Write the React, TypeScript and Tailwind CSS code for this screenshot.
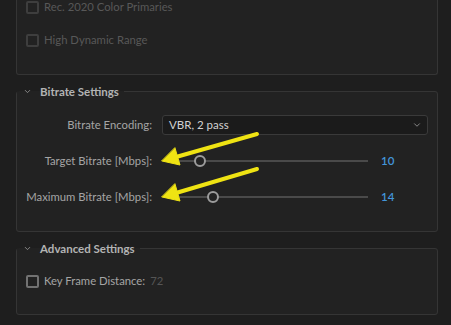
import { ChevronDown } from "lucide-react";

function Checkbox({ dim }: { dim?: boolean }) {
  return (
    <span
      className={`inline-block h-[13px] w-[13px] shrink-0 rounded-[2px] border-2 ${
        dim ? "border-[#3e3e3e]" : "border-[#727272]"
      }`}
    />
  );
}

function Legend({ title }: { title: string }) {
  return (
    <legend className="flex h-4 items-center pl-[6px] pr-[5px]">
      <ChevronDown className="h-[9px] w-[9px] text-[#8a8a8a]" strokeWidth={2.5} />
      <span className="ml-[8px] mt-[1px] text-[11.5px] font-bold text-[#b3b3b3]">{title}</span>
    </legend>
  );
}

function SliderRow({ label, value, thumb }: { label: string; value: number; thumb: number }) {
  return (
    <div className="mt-4 flex h-5 items-center">
      <span className="w-[135px] text-right">{label}</span>
      <div className="relative ml-[12px] h-5 w-[204px]">
        <div className="absolute left-0 right-0 top-[9px] h-[2px] bg-[#4a4a4a]" />
        <div
          className="absolute top-[4px] h-[12px] w-[12px] rounded-full border-2 border-[#9c9c9c] bg-[#232323]"
          style={{ left: thumb }}
        />
      </div>
      <span className="ml-[13px] text-[11.5px] font-semibold text-[#4395da]">{value}</span>
    </div>
  );
}

export default function App() {
  return (
    <div className="relative h-[325px] w-[451px] overflow-hidden bg-[#1e1e1e] font-['Lato',sans-serif] text-[11.3px] text-[#a5a5a5]">
      {/* upper panel, cut off at the top */}
      <div className="ml-4 flex h-[75px] w-[422px] flex-col gap-[19px] rounded-b-[3px] border-x border-b border-[#353535] bg-[#222222] pl-[9px]">
        <div className="flex h-[14px] items-center gap-[5px] text-[#585858]">
          <Checkbox dim />
          <span>Rec. 2020 Color Primaries</span>
        </div>
        <div className="flex h-[14px] items-center gap-[5px] text-[#585858]">
          <Checkbox dim />
          <span>High Dynamic Range</span>
        </div>
      </div>

      <fieldset className="ml-4 mt-2 w-[422px] rounded-[3px] border border-[#353535] bg-[#222222] pb-6">
        <Legend title="Bitrate Settings" />
        <div className="mt-4 flex h-5 items-center">
          <span className="w-[135px] text-right">Bitrate Encoding:</span>
          <div className="ml-[10px] flex h-5 w-[266px] items-center justify-between rounded-[3px] border border-[#3a3a3a] bg-[#1b1b1b] pl-[6px] pr-[5px] text-[11.5px] text-[#d2d2d2]">
            <span>VBR, 2 pass</span>
            <ChevronDown className="h-[10px] w-[10px] text-[#9a9a9a]" strokeWidth={2} />
          </div>
        </div>
        <SliderRow label="Target Bitrate [Mbps]:" value={10} thumb={30} />
        <SliderRow label="Maximum Bitrate [Mbps]:" value={14} thumb={43} />
      </fieldset>

      <fieldset className="ml-4 mt-2 w-[422px] rounded-[3px] border border-[#353535] bg-[#222222] pb-[26px]">
        <Legend title="Advanced Settings" />
        <div className="ml-[9px] mt-[18px] flex h-[14px] items-center">
          <Checkbox />
          <span className="ml-[5px]">Key Frame Distance:</span>
          <span className="ml-[5px] text-[#555555]">72</span>
        </div>
      </fieldset>

      {/* yellow annotation arrows */}
      <svg className="pointer-events-none absolute left-0 top-0" width="451" height="325">
        <g fill="#efe313" stroke="#efe313" strokeLinecap="round">
          <line x1="257" y1="134" x2="176" y2="157" strokeWidth="4" />
          <polygon points="162,161 180,165 175,148" strokeWidth="1" />
          <line x1="257" y1="169" x2="176" y2="193" strokeWidth="4" />
          <polygon points="162,197 180,201 175,184" strokeWidth="1" />
        </g>
      </svg>
    </div>
  );
}
